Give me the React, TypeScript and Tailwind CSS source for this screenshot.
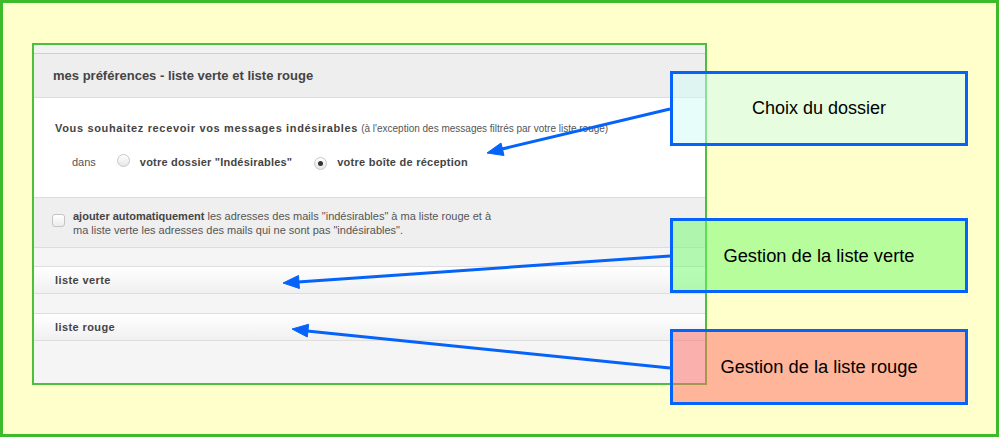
import React from 'react';

const Radio: React.FC<{ checked?: boolean }> = ({ checked }) => (
  <span className="inline-flex w-[13px] h-[13px] rounded-full border border-[#c8c8c8] bg-gradient-to-b from-[#ffffff] to-[#e6e6e6] items-center justify-center">
    {checked && <span className="w-[5px] h-[5px] rounded-full bg-[#333333]" />}
  </span>
);

const App: React.FC = () => {
  return (
    <div className="relative w-[999px] h-[437px] font-['Liberation_Sans',Arial,sans-serif] overflow-hidden">
      {/* Frame */}
      <div className="w-[999px] h-[437px] border-[3px] border-[#3dbb2b] bg-[#ffffcc] pl-[29px] pt-[40px]">
        {/* Panel */}
        <div className="w-[675px] h-[342px] border-2 border-[#4cc03a] bg-[#f5f5f5] flex flex-col">
          <div className="h-[9px] bg-[#f2f2f2] border-b border-[#cfcfcf]" />
          <div className="h-[44px] bg-[#eeeeee] border-b border-[#dddddd] flex items-center pl-[19px]">
            <span className="text-[13px] font-bold text-[#444444]">mes préférences - liste verte et liste rouge</span>
          </div>
          <div className="h-[100px] bg-white border-b border-[#dddddd] pl-[21px] pt-[23px]">
            <p className="text-[11px] text-[#555555] leading-[14px]">
              <span className="font-bold text-[#444444] tracking-[0.65px]">Vous souhaitez recevoir vos messages indésirables</span>{' '}
              <span className="text-[10px]">(à l'exception des messages filtrés par votre liste rouge)</span>
            </p>
            <div className="flex items-center mt-[18px] text-[11px] leading-[14px]">
              <span className="ml-[17px] text-[#555555]">dans</span>
              <span className="ml-[21px]"><Radio /></span>
              <span className="ml-[10px] font-bold text-[#444444] tracking-[0.2px]">votre dossier "Indésirables"</span>
              <span className="ml-[22px]"><Radio checked /></span>
              <span className="ml-[10px] font-bold text-[#444444] tracking-[0.25px]">votre boîte de réception</span>
            </div>
          </div>
          <div className="h-[50px] bg-[#efefef] border-b border-[#dddddd] flex items-start pl-[18px] pt-[11px]">
            <span className="mt-[5px] w-[13px] h-[13px] rounded-[3px] border border-[#c4c4c4] bg-gradient-to-b from-[#ffffff] to-[#ececec]" />
            <p className="ml-[8px] w-[430px] text-[11px] leading-[14px] text-[#555555]">
              <span className="font-bold text-[#444444]">ajouter automatiquement</span> les adresses des mails "indésirables" à ma liste rouge et à ma liste verte les adresses des mails qui ne sont pas "indésirables".
            </p>
          </div>
          <div className="h-[18px]" />
          <div className="h-[28px] border-y border-[#dedede] bg-gradient-to-b from-[#ffffff] to-[#f0f0f0] flex items-center pl-[21px]">
            <span className="text-[11px] font-bold text-[#444444] tracking-[0.4px]">liste verte</span>
          </div>
          <div className="h-[19px]" />
          <div className="h-[28px] border-y border-[#dedede] bg-gradient-to-b from-[#ffffff] to-[#f0f0f0] flex items-center pl-[21px]">
            <span className="text-[11px] font-bold text-[#444444] tracking-[0.4px]">liste rouge</span>
          </div>
        </div>
      </div>

      {/* Arrows */}
      <svg className="absolute left-0 top-0" width="999" height="437" viewBox="0 0 999 437">
        <g stroke="#0563fa" strokeWidth="3" fill="#0563fa">
          <line x1="670" y1="109" x2="502" y2="149" />
          <polygon points="487,153 504,155.5 501,143" strokeWidth="1" />
          <line x1="670" y1="256" x2="298" y2="282" />
          <polygon points="283,283 299.4,288.5 298.5,275.5" strokeWidth="1" />
          <line x1="670" y1="368" x2="307" y2="331" />
          <polygon points="292,329 307.3,337 308.6,324.3" strokeWidth="1" />
        </g>
      </svg>

      {/* Callouts */}
      <div className="absolute left-[670px] top-[71px] w-[298px] h-[75px] border-[3px] border-[#0563fa] bg-[rgba(205,251,244,0.5)] flex items-center justify-center">
        <span className="text-[18px] text-black">Choix du dossier</span>
      </div>
      <div className="absolute left-[670px] top-[218px] w-[298px] h-[75px] border-[3px] border-[#0563fa] bg-[rgba(113,251,108,0.5)] flex items-center justify-center">
        <span className="text-[18.3px] text-black">Gestion de la liste verte</span>
      </div>
      <div className="absolute left-[670px] top-[329px] w-[298px] h-[76px] border-[3px] border-[#0563fa] bg-[rgba(255,107,102,0.5)] flex items-center justify-center">
        <span className="text-[18.3px] text-black">Gestion de la liste rouge</span>
      </div>
    </div>
  );
};

export default App;
